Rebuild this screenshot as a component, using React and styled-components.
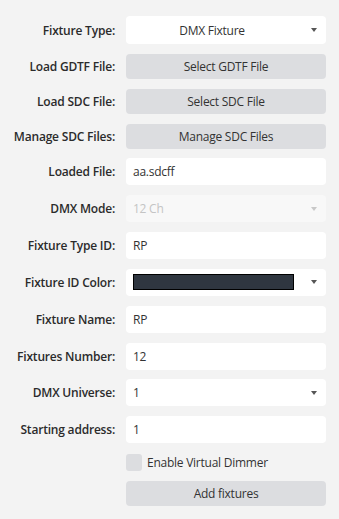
import React from "react";
import styled, { createGlobalStyle } from "styled-components";

const Global = createGlobalStyle`
  html, body { margin: 0; padding: 0; background: #f3f3f3; }
  body { font-family: "Open Sans", "Noto Sans", sans-serif; color: #333; }
`;

const Form = styled.div`
  display: grid;
  grid-template-columns: 115px 200px;
  column-gap: 11px;
  row-gap: 9.85px;
  padding: 16px 13px 14px 0;
  align-items: center;
`;

const Label = styled.div`
  text-align: right;
  font-size: 12px;
  font-weight: 600;
  color: #2b2b2b;
  white-space: nowrap;
  letter-spacing: -0.2px;
`;

const Field = styled.div`
  box-sizing: border-box;
  height: ${(p) => p.$h || 27}px;
  background: ${(p) => (p.$disabled ? "#f8f8f8" : "#ffffff")};
  border-radius: 4px;
  display: flex;
  align-items: center;
  padding: 0 9px 0 7px;
  font-size: 12px;
  color: ${(p) => (p.$disabled ? "#c4c4c4" : "#333")};
  letter-spacing: -0.25px;
`;

const FieldText = styled.span`
  flex: 1;
  text-align: ${(p) => (p.$center ? "center" : "left")};
  padding-right: ${(p) => (p.$center ? "14px" : "0")};
`;

const Arrow = styled.span`
  width: 0;
  height: 0;
  border-left: 3.5px solid transparent;
  border-right: 3.5px solid transparent;
  border-top: 4px solid ${(p) => (p.$disabled ? "#c8c8c8" : "#555")};
  margin-left: 6px;
`;

const Swatch = styled.span`
  box-sizing: border-box;
  height: 16px;
  width: 161px;
  border: 1px solid #000;
  background: #2f3640;
`;

const Spacer = styled.span`
  flex: 1;
`;

const Button = styled.div`
  box-sizing: border-box;
  height: 25px;
  background: #dcdde0;
  border-radius: 4px;
  display: flex;
  align-items: center;
  justify-content: center;
  font-size: 12px;
  color: #333;
  letter-spacing: -0.25px;
`;

const CheckRow = styled.div`
  display: flex;
  align-items: center;
  gap: 5px;
  height: 17px;
  margin-top: 1px;
  font-size: 12px;
  color: #333;
  letter-spacing: -0.25px;
`;

const Box = styled.span`
  width: 16px;
  height: 17px;
  border-radius: 3px;
  background: #dcdde0;
`;

const Select = ({ children, center, disabled, h }) => (
  <Field $disabled={disabled} $h={h}>
    <FieldText $center={center}>{children}</FieldText>
    <Arrow $disabled={disabled} />
  </Field>
);

export default function App() {
  return (
    <>
      <Global />
      <Form>
        <Label>Fixture Type:</Label>
        <Select center h={28}>DMX Fixture</Select>

        <Label>Load GDTF File:</Label>
        <Button>Select GDTF File</Button>

        <Label>Load SDC File:</Label>
        <Button>Select SDC File</Button>

        <Label>Manage SDC Files:</Label>
        <Button>Manage SDC Files</Button>

        <Label>Loaded File:</Label>
        <Field><FieldText>aa.sdcff</FieldText></Field>

        <Label>DMX Mode:</Label>
        <Select disabled>12 Ch</Select>

        <Label>Fixture Type ID:</Label>
        <Field><FieldText>RP</FieldText></Field>

        <Label>Fixture ID Color:</Label>
        <Field>
          <Swatch />
          <Spacer />
          <Arrow />
        </Field>

        <Label>Fixture Name:</Label>
        <Field><FieldText>RP</FieldText></Field>

        <Label>Fixtures Number:</Label>
        <Field><FieldText>12</FieldText></Field>

        <Label>DMX Universe:</Label>
        <Select>1</Select>

        <Label>Starting address:</Label>
        <Field><FieldText>1</FieldText></Field>

        <span />
        <CheckRow>
          <Box />
          Enable Virtual Dimmer
        </CheckRow>

        <span />
        <Button>Add fixtures</Button>
      </Form>
    </>
  );
}
